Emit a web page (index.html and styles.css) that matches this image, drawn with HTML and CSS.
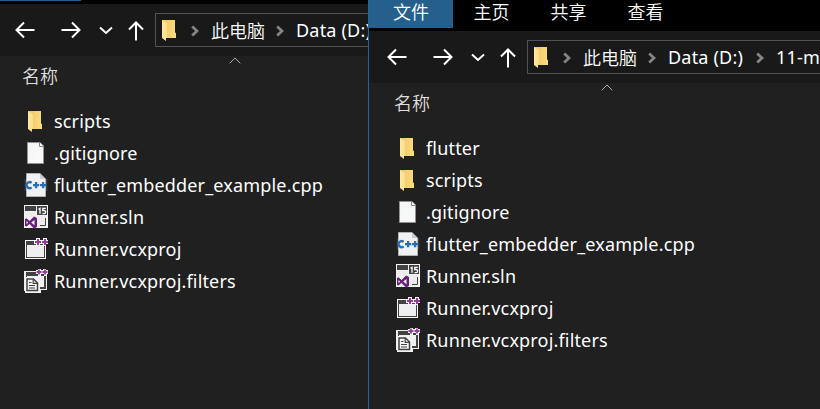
FILE: index.html
```
<!DOCTYPE html>
<html lang="zh-CN">
<head>
<meta charset="utf-8">
<title>文件资源管理器</title>
<link rel="stylesheet" href="styles.css">
</head>
<body>
<svg class="defs" aria-hidden="true">
  <defs>
    <linearGradient id="gold" x1="0" x2="1"><stop offset="0" stop-color="#efc65c"/><stop offset="1" stop-color="#fbdc83"/></linearGradient>
    <linearGradient id="flap" x1="0" x2="1"><stop offset="0" stop-color="#ffe7a0"/><stop offset="1" stop-color="#fbdc8c"/></linearGradient>
    <linearGradient id="sheet" x1="0" x2="1" y2="1"><stop offset="0" stop-color="#f3f5f6"/><stop offset="1" stop-color="#fafafa"/></linearGradient>
    <linearGradient id="halo" x1="0" x2="1"><stop offset="0" stop-color="#73808c" stop-opacity="0"/><stop offset=".15" stop-color="#8a949c"/><stop offset=".85" stop-color="#8a949c"/><stop offset="1" stop-color="#73808c" stop-opacity="0"/></linearGradient>
    <symbol id="folder" viewBox="0 0 24 24">
      <path d="M4 2h13v12.500l1 .5v5H8z" fill="url(#gold)"/>
      <path d="M4 2l5 3v14l-1 1v3l-4-3z" fill="url(#flap)"/>
    </symbol>
    <symbol id="file" viewBox="0 0 24 24">
      <path d="M3.500 1.500H16l3.500 3.500v17.500h-16z" fill="url(#sheet)" stroke="#929292"/>
      <path d="M15.500 1.500v4h4" fill="#fff" stroke="#808080"/>
    </symbol>
    <symbol id="cpp" viewBox="0 0 24 24">
      <path d="M0 6h24v12H0z" fill="url(#halo)" opacity=".7"/>
      <path d="M2.500.5H16l5.500 5.500v17.500h-19z" fill="#f0f1f2" stroke="#bbb" stroke-width=".8"/>
      <path d="M16 .5v5.500h5.500z" fill="#cbcccd"/>
      <path d="M7.600 9.800a3 3 0 1 0 0 4.600M9 12.100h6.200M12.100 9v6.200M16 12.100h6.200M19.100 9v6.200" fill="none" stroke="#2870b5" stroke-width="2.300"/>
    </symbol>
    <symbol id="sln" viewBox="0 0 24 24">
      <path d="M0 0h24v23H0z" fill="#f4f4f4"/>
      <path d="M1 1h11v5H1zM13 1h10v9H13z" fill="#424242"/>
      <path d="M1 7h11v4h10v11H12V12H1z" fill="#ececee"/>
      <path d="M16 20.500h5.500V13" fill="none" stroke="#424242"/>
      <path d="M14.500 4.200l1.500-.9v5.500M21.800 3.300h-3v2.200h1.100c2.500 0 2.300 3.100 0 3.100h-1.400" fill="none" stroke="#fff" stroke-width="1.300"/>
      <path fill-rule="evenodd" d="M1 14l1.500-.7L5.500 16 10 11.500l3 1.500v9l-3 1.500L5.500 19l-3 2.500L1 21zM2.500 16v3.300L4.200 17.600zM7.200 17.600L10.500 20.300V15z" fill="#68217a"/>
    </symbol>
    <symbol id="vcx" viewBox="0 0 24 24">
      <path d="M1 3h21v19H1z" fill="#f7f7f7"/>
      <path d="M2 4h19v17H2z" fill="#424242"/>
      <path d="M3 8h17v12H3z" fill="#efeff1"/>
      <path d="M10 3h2V1h4v2h3V1h4v2h1v4h-2v2h-3V7h-3v2h-4V7h-2z" fill="#f8f5f8"/>
      <path d="M11 5h6M14 2v6M18 5h6M21 2v6" stroke="#953b95" stroke-width="2"/>
    </symbol>
    <symbol id="filters" viewBox="0 0 24 24">
      <path d="M1 2h22v19h-6v3H2v-2H0V2z" fill="#eee"/>
      <path d="M2 3h20v17H2z" fill="#424242"/>
      <path d="M3 7h17v11H3z" fill="#efeff1"/>
      <path d="M1 8h10l5 5v11H1z" fill="#f4f4f4"/>
      <path d="M3 10h6.500l4 4v7.500H3z" fill="#f4f4f4" stroke="#424242" stroke-width="1.500"/>
      <path d="M9.200 10v4.300h4.300M5 13.500h2.500M5 16.500h6M5 19h6" fill="none" stroke="#424242" stroke-width="1.200"/>
      <path d="M12 1h2v-1h3v1h2v-1h3v1h2v4h-1v2h-3V5h-3v2h-3V5h-2z" fill="#f8f5f8"/>
      <path d="M12.500 3h5M15 .5v5M18.500 3h5M21 .5v5" stroke="#953b95" stroke-width="1.800"/>
    </symbol>
    <symbol id="back" viewBox="0 0 20 20"><path d="M19.500 10H1.500M9 2.500L1.500 10 9 17.500"/></symbol>
    <symbol id="forward" viewBox="0 0 20 20"><path d="M.5 10h18M11 2.500l7.500 7.500-7.500 7.500"/></symbol>
    <symbol id="recent" viewBox="0 0 14 20"><path d="M1 7.500l6 5.500 6-5.500"/></symbol>
    <symbol id="up" viewBox="0 0 16 20"><path d="M8 19.500v-18M1 8.500l7-7 7 7"/></symbol>
    <symbol id="crumb" viewBox="0 0 8 12"><path d="M1.200 1.500L6 6l-4.800 4.500"/></symbol>
  </defs>
</svg>
<div class="desktop">
  <section class="window window-left">
    <div class="ribbon ribbon-cut"><span class="tab active"></span></div>
    <nav class="nav">
      <svg class="go"><use href="#back"/></svg><svg class="go forward"><use href="#forward"/></svg><svg class="go recent"><use href="#recent"/></svg><svg class="go up"><use href="#up"/></svg>
      <div class="address">
        <svg class="icon"><use href="#folder"/></svg><svg class="crumb first"><use href="#crumb"/></svg><span class="pc">此电脑</span><svg class="crumb"><use href="#crumb"/></svg><span class="drive">Data (D:)</span>
      </div>
    </nav>
    <div class="content">
      <div class="heading"><span>名称</span><svg class="sort" viewBox="0 0 12 7"><path d="M.7 6.300L6 1l5.300 5.300"/></svg></div>
      <ul class="files">
        <li><svg class="icon"><use href="#folder"/></svg><span>scripts</span></li>
        <li><svg class="icon"><use href="#file"/></svg><span>.gitignore</span></li>
        <li><svg class="icon"><use href="#cpp"/></svg><span>flutter_embedder_example.cpp</span></li>
        <li><svg class="icon"><use href="#sln"/></svg><span>Runner.sln</span></li>
        <li><svg class="icon"><use href="#vcx"/></svg><span>Runner.vcxproj</span></li>
        <li><svg class="icon"><use href="#filters"/></svg><span>Runner.vcxproj.filters</span></li>
      </ul>
    </div>
  </section>
  <section class="window window-right">
    <div class="ribbon"><span class="tab active">文件</span><span class="tab">主页</span><span class="tab">共享</span><span class="tab">查看</span></div>
    <nav class="nav">
      <svg class="go"><use href="#back"/></svg><svg class="go forward"><use href="#forward"/></svg><svg class="go recent"><use href="#recent"/></svg><svg class="go up"><use href="#up"/></svg>
      <div class="address">
        <svg class="icon"><use href="#folder"/></svg><svg class="crumb first"><use href="#crumb"/></svg><span class="pc">此电脑</span><svg class="crumb"><use href="#crumb"/></svg><span class="drive">Data (D:)</span><svg class="crumb"><use href="#crumb"/></svg><span class="drive">11-m</span>
      </div>
    </nav>
    <div class="content">
      <div class="heading"><span>名称</span><svg class="sort" viewBox="0 0 12 7"><path d="M.7 6.300L6 1l5.300 5.300"/></svg></div>
      <ul class="files">
        <li><svg class="icon"><use href="#folder"/></svg><span>flutter</span></li>
        <li><svg class="icon"><use href="#folder"/></svg><span>scripts</span></li>
        <li><svg class="icon"><use href="#file"/></svg><span>.gitignore</span></li>
        <li><svg class="icon"><use href="#cpp"/></svg><span>flutter_embedder_example.cpp</span></li>
        <li><svg class="icon"><use href="#sln"/></svg><span>Runner.sln</span></li>
        <li><svg class="icon"><use href="#vcx"/></svg><span>Runner.vcxproj</span></li>
        <li><svg class="icon"><use href="#filters"/></svg><span>Runner.vcxproj.filters</span></li>
      </ul>
    </div>
  </section>
</div>
</body>
</html>
```
FILE: styles.css
```
* { box-sizing: border-box; }
body {
  margin: 0;
  background: #202020;
  color: #fff;
  font: 18px/24px "Noto Sans", "Noto Sans CJK SC", sans-serif;
}
svg { display: block; flex: none; }
.defs { position: absolute; width: 0; height: 0; }
.desktop { display: flex; width: 820px; height: 409px; overflow: hidden; }
.window { flex: none; overflow: hidden; background: #202020; }
.window-left { width: 368px; }
.window-right { width: 452px; border-left: 1px solid #2d638d; }
.window-left > * { margin-left: -3px; }
.ribbon { display: flex; height: 31px; background: #000; }
.ribbon-cut { height: 4px; }
.ribbon-cut .tab { height: 1px; }
.tab {
  width: 77px;
  height: 28px;
  text-align: center;
  line-height: 22px;
  font-family: "Noto Sans CJK SC", sans-serif;
  font-weight: 350;
}
.tab.active { width: 84px; background: #255f8c; }
.nav {
  display: flex;
  align-items: flex-start;
  height: 52px;
  padding: 9px 0 0 18px;
  background: #191919;
  white-space: nowrap;
}
.go {
  width: 20px;
  height: 20px;
  margin-top: 7px;
  fill: none;
  stroke: #fff;
  stroke-width: 2;
}
.forward { margin-left: 26px; }
.recent { width: 14px; margin-left: 18px; }
.up { width: 16px; margin: 8px 11px 0 15px; }
.address {
  display: flex;
  align-items: center;
  flex: none;
  width: 500px;
  height: 34px;
  padding-left: 2px;
  border: 1px solid #535353;
}
.icon { width: 24px; height: 24px; overflow: visible; }
.crumb { width: 8px; height: 12px; margin: 2px 12px 0 11px; fill: none; stroke: #858585; stroke-width: 2.8; }
.crumb.first { margin-left: 9px; }
.pc { width: 54px; font-family: "Noto Sans CJK SC", sans-serif; font-weight: 350; line-height: 22px; }
.drive { width: 77px; letter-spacing: .2px; }
.content { position: relative; padding: 49px 0 0 27px; }
.heading {
  position: absolute;
  top: 7px;
  left: 26px;
  color: #dedede;
  font-family: "Noto Sans CJK SC", sans-serif;
  font-weight: 350;
}
.heading span { margin-left: -1px; }
.sort { position: absolute; top: -6px; left: 206px; width: 12px; height: 7px; fill: none; stroke: #aaa; }
.files { margin: 0; padding: 0; list-style: none; }
.files li { display: flex; align-items: center; gap: 6px; height: 32px; white-space: nowrap; letter-spacing: .17px; }
```
